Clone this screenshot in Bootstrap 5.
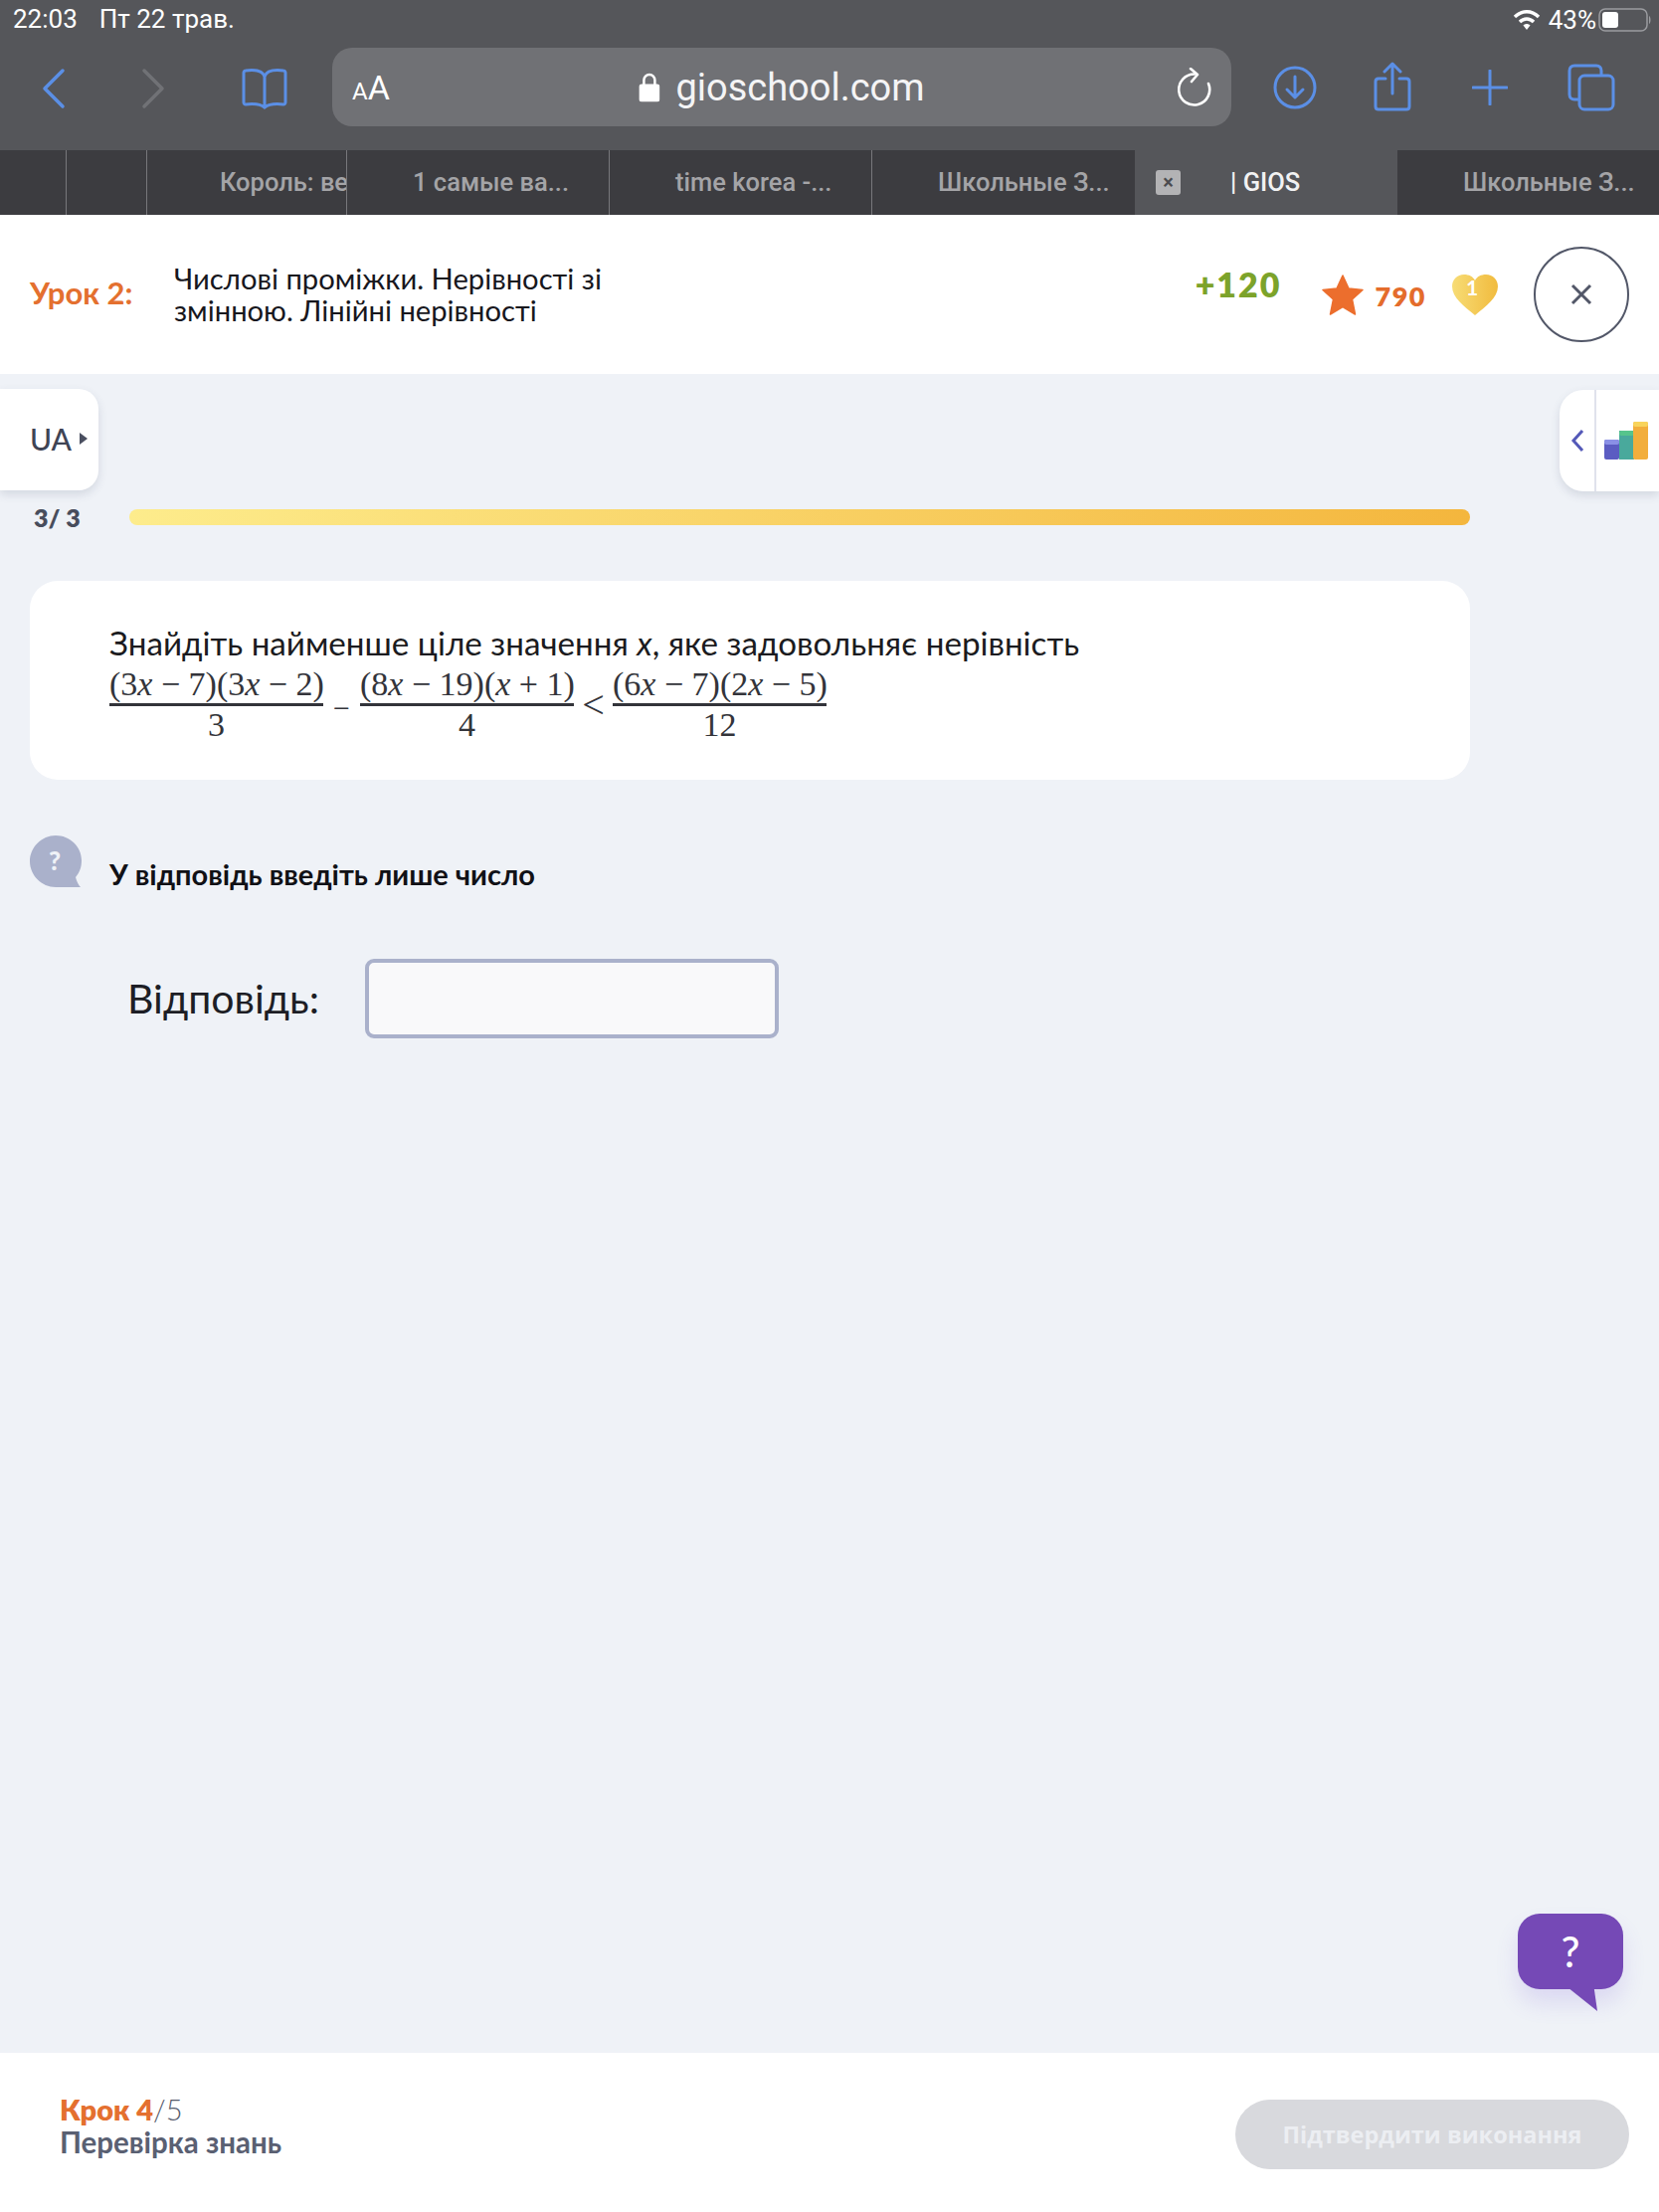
<!DOCTYPE html>
<html lang="uk"><head><meta charset="utf-8"><title>GIOS</title>
<link href="https://cdn.jsdelivr.net/npm/bootstrap@5.3.0/dist/css/bootstrap.min.css" rel="stylesheet">
<style>
html,body{height:2224px;overflow:hidden}
body{font-family:Lato,"Noto Sans",sans-serif;background:#eff2f7;color:#14141a}
.app{height:2224px}
.chrome{background:#55565a;height:151px;color:#fff;font-family:Roboto,sans-serif}
.status{height:40px;padding:0 7px 0 13px;font-size:26px;line-height:38px}
.status .dt{margin-left:22px}
.statusright{gap:2px}
.statusright .pct{margin-left:6px}
.tools{height:111px;position:relative}
.tools svg{display:block;flex:none}
.urlbar{width:904px;height:79px;background:#707175;border-radius:20px;margin-top:8px;padding:0 20px;position:relative}
.urlbar .aa{font-size:34px;line-height:1}
.urlbar .aa small{font-size:24px}
.urlbar .addr{font-size:38px;color:#f4f4f5}
.tabstrip{height:65px;background:#3c3c40;color:#a4a4a7;font:500 25.5px/65px Roboto,sans-serif}
.tabx{border-right:1px solid #77777b;white-space:nowrap;overflow:hidden;flex:none;padding-left:66px}
.w1{width:67px;padding:0}.w2{width:81px;padding:0}.w3{width:201px;padding-left:73px}.w4{width:264px}.w5{width:264px;border-right:0}
.tabon{width:264px;background:#55565a;color:#f2f2f3;flex:none;padding-left:21px}
.tabclose{width:25px;height:25px;background:#b3b3b5;color:#4b4b4f;border-radius:3px;font:700 20px/25px Roboto,sans-serif;text-align:center;margin-right:50px}
.lessonbar{height:160px;background:#fff;padding:0 30px}
.lessonno{color:#e4702f;font-size:31px;font-weight:700;width:145px;flex:none;margin-top:-3px}
.lessontitle{font-size:29.2px;line-height:32px;width:500px;color:#17171d}
.bonus{color:#7ca32a;font-weight:800;font-size:34px;letter-spacing:2px;position:relative;top:-11px;margin-right:40px}
.coins{color:#e46c2c;font-weight:800;font-size:27px;letter-spacing:1.5px;margin:0 26px 0 12px;position:relative;top:2px}
.closebtn{width:96px;height:96px;border:2px solid #525768;border-radius:50%;margin-left:36px;background:none}
.workspace{position:relative;padding:0 30px}
.langtab{position:absolute;left:0;top:15px;width:99px;height:102px;background:#fff;border-radius:0 20px 20px 0;box-shadow:0 4px 10px rgba(70,80,110,.16);padding:0 0 2px 30px;color:#3f4454;font-size:30px;font-weight:500}
.tri{display:inline-block;border-left:8px solid #4a4f60;border-top:6px solid transparent;border-bottom:6px solid transparent;margin-left:8px}
.sidetab{position:absolute;right:0;top:16px;width:100px;height:102px;background:#fff;border-radius:24px 0 0 24px;box-shadow:0 4px 10px rgba(70,80,110,.16)}
.sidechev{width:37px;border-right:2px solid #e0e2ec}
.progressrow{width:1448px;margin-top:136px;height:16px}
.progressnum{width:100px;flex:none;font-size:25px;font-weight:800;color:#484d5c;padding-left:4px;line-height:14px}
.barfill{flex:1;height:16px;border-radius:8px;background:linear-gradient(90deg,#fdec8c,#f4b63d)}
.taskcard{width:1448px;height:200px;margin-top:56px;background:#fff;border-radius:28px;padding:44px 80px 0}
.tasktext{font-size:33.2px;line-height:36px;color:#1b1b20;white-space:nowrap}
.formula{font-family:"Liberation Serif",serif;font-size:34px;color:#33343a;height:76px}
.frac{display:flex;flex-direction:column;align-items:center;white-space:nowrap;line-height:38px}
.frac .top{border-bottom:3px solid #33343a;height:49px;padding-top:5px;width:215px;text-align:center}
.frac .bot{line-height:38px}
.opsign{width:37px;text-align:center;padding-top:25px;font-size:30px}
.lt{width:39px;font-size:40px;padding-top:15px}
.hintrow{margin-top:56px;height:52px}
.hintmark{width:52px;height:52px;flex:none;margin-right:28px}
.hinttext{font-size:29px;font-weight:700;padding-top:17px;color:#111116;white-space:nowrap}
.answerrow{margin-top:72px;padding-left:98px}
.answerlabel{font-size:41px;font-weight:400;margin:0 46px 0 0;color:#1d1e25;width:193px;white-space:nowrap}
.answerinput{width:416px;flex:none;height:80px;border:4px solid #aab1cb;border-radius:9px;background:#f9f9fa;box-shadow:none}
.helpfab{position:absolute;right:36px;bottom:42px;width:106px;height:98px}
.helpbubble{position:absolute;inset:0 0 22px 0;background:#7549b6;border-radius:22px;color:#fff;font-size:42px;font-weight:500;text-align:center;line-height:76px;box-shadow:0 14px 22px rgba(120,90,220,.16)}
.helptail{position:absolute;left:0;top:70px;z-index:1}
.stepbar{height:160px;background:#fff;padding:0 30px}
.stepinfo{margin-top:-14px}
.stepno{font-size:29px;line-height:33px;color:#555b6d;padding-left:30px}
.stepno b{color:#e4702f;font-weight:800}
.stepno span{font-weight:300}
.stepname{font-weight:700;color:#5a6072;font-size:29.500px;line-height:33px;padding-left:30px}
.confirm.btn:disabled{width:396px;height:70px;border:0;border-radius:35px;background:#d8d9dd;color:#eceef2;opacity:1;font:700 23.5px "Open Sans",sans-serif;margin-top:4px;white-space:nowrap;padding:0}
</style></head>
<body>
<div class="app d-flex flex-column">
  <div class="chrome flex-shrink-0">
    <div class="status d-flex justify-content-between">
      <div><span>22:03</span><span class="dt">Пт 22 трав.</span></div>
      <div class="statusright d-flex align-items-center">
        <svg width="28" height="22" viewBox="0 0 28 22"><path d="M2 8C9 1 19 1 26 8" fill="none" stroke="#fff" stroke-width="3.4"/><path d="M7 13c4-4 10-4 14 0" fill="none" stroke="#fff" stroke-width="3.4"/><path d="M10.500 16.500c2-2 5-2 7 0L14 21z" fill="#fff"/></svg>
        <span class="pct">43%</span>
        <svg width="54" height="26" viewBox="0 0 54 26"><rect x="1" y="2" width="48" height="22" rx="6" fill="none" stroke="#9b9ca0" stroke-width="1.500"/><rect x="4" y="5" width="16" height="16" rx="3" fill="#fff"/><path d="M51 9c2 1 2 7 0 8z" fill="#9b9ca0"/></svg>
      </div>
    </div>
    <div class="tools d-flex align-items-start">
      <svg style="margin-top:28px;margin-left:42px" width="24" height="42" viewBox="0 0 24 42"><path d="M21 3 3 21l18 18" fill="none" stroke="#5b8fe6" stroke-width="3.500" stroke-linecap="round" stroke-linejoin="round"/></svg>
      <svg style="margin-top:28px;margin-left:76px" width="24" height="42" viewBox="0 0 24 42"><path d="M3 3l18 18L3 39" fill="none" stroke="#717276" stroke-width="3.500" stroke-linecap="round" stroke-linejoin="round"/></svg>
      <svg style="margin-top:28px;margin-left:77px" width="46" height="42" viewBox="0 0 46 42"><path d="M23 9C21 3 12 2 4 3c-1 0-2 1-2 2v30c0 1 1 2 2 2 8-1 14-1 19 3 5-4 11-4 19-3 1 0 2-1 2-2V5c0-1-1-2-2-2-8-1-17 0-19 6zm0 0v31" fill="none" stroke="#5b8fe6" stroke-width="3"/></svg>
      <div class="urlbar d-flex align-items-center" style="margin-left:45px">
        <div class="aa"><small>A</small>A</div>
        <div class="addr position-absolute top-50 start-50 translate-middle d-flex align-items-center gap-3">
          <svg width="21" height="30" viewBox="0 0 21 30"><path d="M5 13V8a5.500 5.500 0 0 1 11 0v5" fill="none" stroke="#fff" stroke-width="2.500"/><rect y="12" width="21" height="18" rx="3" fill="#fff"/></svg>
          <span>gioschool.com</span>
        </div>
        <svg class="ms-auto" width="34" height="40" viewBox="0 0 34 40"><path d="M17 6.500A15.500 15.500 0 1 0 31 16" fill="none" stroke="#fff" stroke-width="2.600" stroke-linecap="round"/><path d="M13 1l7 6-6 7" fill="none" stroke="#fff" stroke-width="2.600" stroke-linecap="round" stroke-linejoin="round"/></svg>
      </div>
      <svg style="margin-top:26px;margin-left:42px" width="44" height="44" viewBox="0 0 44 44"><circle cx="22" cy="22" r="20" fill="none" stroke="#5b8fe6" stroke-width="3"/><path d="M22 11v21M14 24l8 8 8-8" fill="none" stroke="#5b8fe6" stroke-width="3" stroke-linecap="round" stroke-linejoin="round"/></svg>
      <svg style="margin-top:22px;margin-left:57px" width="38" height="50" viewBox="0 0 38 50"><path d="M12 17H5c-2 0-3 1-3 3v25c0 2 1 3 3 3h28c2 0 3-1 3-3V20c0-2-1-3-3-3h-7M19 32V3M11 10l8-8 8 8" fill="none" stroke="#5b8fe6" stroke-width="3" stroke-linecap="round" stroke-linejoin="round"/></svg>
      <svg style="margin-top:30px;margin-left:61px" width="36" height="36" viewBox="0 0 36 36"><path d="M18 1v34M1 18h34" stroke="#5b8fe6" stroke-width="3" stroke-linecap="round"/></svg>
      <svg style="margin-top:24px;margin-left:60px" width="48" height="48" viewBox="0 0 48 48"><path d="M11 36H7c-3 0-5-2-5-5V7c0-3 2-5 5-5h22c3 0 5 2 5 5v4" fill="none" stroke="#5b8fe6" stroke-width="3"/><rect x="12" y="12" width="34" height="34" rx="5" fill="none" stroke="#5b8fe6" stroke-width="3"/></svg>
    </div>
  </div>
  <div class="tabstrip d-flex flex-shrink-0">
    <div class="tabx w1"></div><div class="tabx w2"></div>
    <div class="tabx w3">Король: ве</div>
    <div class="tabx w4">1 самые ва...</div>
    <div class="tabx w4">time korea -...</div>
    <div class="tabx w4 border-0">Школьные З...</div>
    <div class="tabon d-flex align-items-center"><div class="tabclose">×</div><span>| GIOS</span></div>
    <div class="tabx w5">Школьные З...</div>
  </div>
  <header class="lessonbar d-flex align-items-center flex-shrink-0">
    <div class="lessonno">Урок 2:</div>
    <div class="lessontitle">Числові проміжки. Нерівності зі змінною. Лінійні нерівності</div>
    <div class="ms-auto d-flex align-items-center">
      <span class="bonus">+120</span>
      <svg width="42" height="41" viewBox="0 0 42 41"><path d="M21 1l6 13 14 1.500-10.500 9.500 3 15L21 32.500 8.500 40l3-15L1 15.500 15 14z" fill="#ec6e2d" stroke="#ec6e2d" stroke-width="1.500" stroke-linejoin="round"/></svg>
      <span class="coins">790</span>
      <svg width="46" height="41" viewBox="0 0 46 41"><defs><linearGradient id="hg"><stop offset="0" stop-color="#f7dc75"/><stop offset="1" stop-color="#f1bb3e"/></linearGradient></defs><path d="M23 41C12 32 0 23 0 12 0 5 5 0 12 0c5 0 9 2 11 6 2-4 6-6 11-6 7 0 12 5 12 12 0 11-12 20-23 29z" fill="url(#hg)"/><text x="20" y="21" font-family="Lato" font-weight="700" font-size="21" fill="#fff" text-anchor="middle">1</text></svg>
      <button class="closebtn d-flex align-items-center justify-content-center p-0" aria-label="Закрити"><svg width="22" height="22" viewBox="0 0 22 22"><path d="M2 2l18 18M20 2 2 20" stroke="#525768" stroke-width="3"/></svg></button>
    </div>
  </header>
  <main class="workspace flex-grow-1">
    <div class="langtab d-flex align-items-center">UA<span class="tri"></span></div>
    <div class="sidetab d-flex">
      <div class="sidechev d-flex align-items-center justify-content-center"><svg width="14" height="24" viewBox="0 0 14 24"><path d="M12 2 3 12l9 10" fill="none" stroke="#5459b8" stroke-width="3"/></svg></div>
      <svg class="align-self-center ms-2" width="44" height="38" viewBox="0 0 44 38"><rect y="18" width="15" height="20" rx="2" fill="#5b5cc2"/><rect y="18" width="15" height="5" rx="2" fill="#8a90e6"/><rect x="15" y="9" width="15" height="29" fill="#49a99c"/><rect x="15" y="9" width="15" height="5" rx="2" fill="#56c48c"/><rect x="29" width="15" height="38" rx="2" fill="#f2ae3c"/><rect x="29" width="15" height="5" rx="2" fill="#f8d45c"/></svg>
    </div>
    <div class="progressrow d-flex align-items-center">
      <div class="progressnum">3/ 3</div>
      <div class="barfill"></div>
    </div>
    <section class="taskcard">
      <div class="tasktext">Знайдіть найменше ціле значення <i>x</i>, яке задовольняє нерівність</div>
      <div class="formula d-flex">
        <div class="frac"><div class="top">(3<i>x</i> − 7)(3<i>x</i> − 2)</div><div class="bot">3</div></div>
        <div class="opsign">−</div>
        <div class="frac"><div class="top">(8<i>x</i> − 19)(<i>x</i> + 1)</div><div class="bot">4</div></div>
        <div class="opsign lt">&lt;</div>
        <div class="frac"><div class="top">(6<i>x</i> − 7)(2<i>x</i> − 5)</div><div class="bot">12</div></div>
      </div>
    </section>
    <div class="hintrow d-flex">
      <svg class="hintmark" viewBox="0 0 52 52"><path d="M26 0c14 0 26 11 26 25 0 7-2 12-6 17 1 4 3 8 5 10H26C12 52 0 40 0 26S12 0 26 0z" fill="#aab1cb"/><text x="25" y="35" font-family="Lato" font-weight="900" font-size="26" fill="#eff2f7" text-anchor="middle">?</text></svg>
      <div class="hinttext">У відповідь введіть лише число</div>
    </div>
    <div class="answerrow d-flex align-items-center">
      <label class="answerlabel" for="answerbox">Відповідь:</label>
      <input id="answerbox" class="answerinput form-control" type="text">
    </div>
    <div class="helpfab">
      <svg class="helptail" width="106" height="28" viewBox="0 0 106 28"><path d="M45 0l35 28-4-28z" fill="#7549b6"/></svg>
      <div class="helpbubble">?</div>
    </div>
  </main>
  <footer class="stepbar d-flex align-items-center justify-content-between flex-shrink-0">
    <div class="stepinfo">
      <div class="stepno"><b>Крок 4</b><span>/5</span></div>
      <div class="stepname">Перевірка знань</div>
    </div>
    <button class="confirm btn" disabled>Підтвердити виконання</button>
  </footer>
</div>
</body></html>
